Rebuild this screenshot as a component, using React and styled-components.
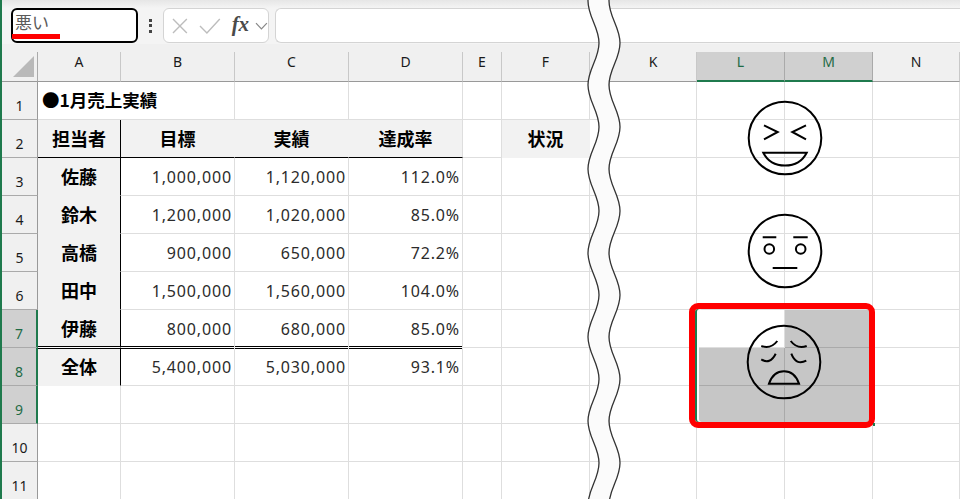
import React from "react";
import styled, { createGlobalStyle } from "styled-components";

const GREEN = "#1f7a4d";
const GRID = "#dedede";
const UI_FONT = `"Noto Sans", "Noto Sans CJK JP", sans-serif`;
const CJK_FONT = `"Noto Sans CJK JP", "Noto Sans", sans-serif`;

const Global = createGlobalStyle`
  html, body { margin: 0; padding: 0; background: #fff; overflow: hidden; }
  * { box-sizing: border-box; }
`;

const Page = styled.div`
  position: relative;
  width: 960px;
  height: 499px;
  overflow: hidden;
  border-left: 2px solid ${GREEN};
  font-family: ${UI_FONT};
  background: #fff;
`;

const FormulaBar = styled.div`
  display: flex;
  align-items: stretch;
  height: 44px;
  padding: 8px 0 1px 9px;
  background: linear-gradient(#e6e6e6 0, #f4f4f4 8px);
`;

const NameBox = styled.div`
  position: relative;
  width: 127px;
  border: 2px solid #000;
  border-radius: 6px;
  background: #fff;
  padding: 1px 0 0 2px;
  font-family: ${CJK_FONT};
  font-size: 17px;
  line-height: 22px;
  color: #5a5a5a;
`;

const RedUnderline = styled.span`
  position: absolute;
  left: -1px;
  top: 24px;
  width: 48px;
  height: 5px;
  background: #f00;
`;

const Dots = styled.div`
  width: 25px;
  display: flex;
  flex-direction: column;
  align-items: center;
  justify-content: center;
  gap: 2.5px;
  & > i { display: block; width: 3px; height: 3px; background: #444; }
`;

const ActionBox = styled.div`
  display: flex;
  align-items: center;
  width: 106px;
  border: 1px solid #d4d4d4;
  border-radius: 6px;
  background: #fff;
  padding-left: 8px;
`;

const CancelIcon = styled.svg`
  fill: none;
  stroke: #bdbdbd;
  stroke-width: 1.4;
`;

const EnterIcon = styled(CancelIcon)`
  margin-left: 11px;
`;

const ChevronIcon = styled.svg`
  fill: none;
  stroke: #888;
  stroke-width: 1.2;
  margin-left: 6px;
`;

const FxLabel = styled.span`
  font-family: "Liberation Serif", serif;
  font-style: italic;
  font-weight: 700;
  font-size: 21px;
  line-height: 1;
  color: #4a4a4a;
  margin: -2px 0 0 11px;
`;

const FormulaInput = styled.div`
  flex: 1;
  margin-left: 6px;
  border: 1px solid #d4d4d4;
  border-right: 0;
  border-radius: 6px 0 0 6px;
  background: #fff;
`;

const Sheet = styled.div`
  display: grid;
  grid-template-columns: 36px 83px 114px 114px 114px 39px 88px 20px 87px 88px 88px 87px;
  grid-template-rows: repeat(12, 38px);
`;

const HeaderSlot = styled.div`
  background: #f0f0f0;
  padding-top: 8px;
  display: flex;
`;

const CornerCell = styled(HeaderSlot)`
  & > div {
    flex: 1;
    border-right: 1px solid #aaa;
    border-bottom: 1px solid #999;
    position: relative;
  }
  & > div::after {
    content: "";
    position: absolute;
    left: 11px;
    top: 4px;
    width: 21px;
    height: 21px;
    background: #b9b9b9;
    clip-path: polygon(100% 0, 100% 100%, 0 100%);
  }
`;

const ColHead = styled.div`
  flex: 1;
  display: flex;
  justify-content: center;
  font-size: 14px;
  line-height: 20px;
  color: ${(p) => (p.$on ? "#1f6b45" : "#1a1a1a")};
  background: ${(p) => (p.$on ? "#d0d0d0" : "#f0f0f0")};
  border-right: 1px solid ${(p) => (p.$on ? "#aaa" : "#c8c8c8")};
  border-bottom: ${(p) => (p.$on ? `2px solid ${GREEN}` : "1px solid #999")};
`;

const RowHead = styled.div`
  display: flex;
  justify-content: center;
  align-items: flex-end;
  padding-bottom: 3px;
  font-size: 14px;
  line-height: 20px;
  color: ${(p) => (p.$on ? "#1f6b45" : "#1a1a1a")};
  background: ${(p) => (p.$on ? "#d0d0d0" : "#f0f0f0")};
  border-right: ${(p) => (p.$on ? `2px solid ${GREEN}` : "1px solid #999")};
  border-bottom: 1px solid #aaa;
`;

const Cell = styled.div`
  grid-column: span ${(p) => p.$span || 1};
  display: flex;
  align-items: center;
  justify-content: ${(p) =>
    p.$align === "center" ? "center" : p.$align === "right" ? "flex-end" : "flex-start"};
  padding: ${(p) => (p.$align === "center" ? "0" : "0 2px 0 4px")};
  white-space: nowrap;
  background: ${(p) => p.$fill || "#fff"};
  border-right: 1px solid ${(p) => p.$rightLine || GRID};
  border-bottom: 1px solid ${(p) => p.$bottomLine || GRID};
  box-shadow: ${(p) => p.$shadow || "none"};
  font-size: 16px;
  letter-spacing: 0.85px;
  color: #2b2b2b;
`;

const Strong = styled.span`
  font-family: ${CJK_FONT};
  font-weight: 700;
  font-size: 18px;
  letter-spacing: 0;
  color: #000;
  margin-top: -2px;
`;

const Title = styled(Strong)`
  font-size: 17.5px;
`;

const WaveArt = styled.svg`
  position: absolute;
  left: 578px;
  top: 0;
`;

const Face = styled.svg`
  position: absolute;
  left: ${(p) => p.$x}px;
  top: ${(p) => p.$y}px;
  fill: none;
  stroke: #000;
  stroke-width: 2;
`;

const SelectionFrame = styled.div`
  position: absolute;
  left: 687px;
  top: 303px;
  width: 186px;
  height: 125px;
  border: 6px solid #f00;
  border-radius: 9px;
  box-shadow: inset 2px 0 0 ${GREEN}, inset 4px 0 0 #fff;
  &::after {
    content: "";
    position: absolute;
    right: -6px;
    bottom: -4px;
    width: 2px;
    height: 3px;
    background: ${GREEN};
  }
`;

const COLS = ["A", "B", "C", "D", "E", "F", "", "K", "L", "M", "N"];

const DATA = {
  3: ["佐藤", "1,000,000", "1,120,000", "112.0%"],
  4: ["鈴木", "1,200,000", "1,020,000", "85.0%"],
  5: ["高橋", "900,000", "650,000", "72.2%"],
  6: ["田中", "1,500,000", "1,560,000", "104.0%"],
  7: ["伊藤", "800,000", "680,000", "85.0%"],
  8: ["全体", "5,400,000", "5,030,000", "93.1%"],
};
const HEAD2 = ["担当者", "目標", "実績", "達成率"];
const BAND = "#f2f2f2";
const SEL = "#c6c6c6";

function cellProps(r, c) {
  const p = {};
  const col = COLS[c];
  if (r === 1 && col === "A") p.$span = 2;
  if (r === 2 && c < 4) {
    p.$fill = BAND;
    p.$rightLine = c === 0 ? "#000" : BAND;
    p.$bottomLine = "#000";
    if (c === 3) p.$rightLine = GRID;
  }
  if (r === 2 && col === "F") {
    p.$fill = BAND;
    p.$rightLine = BAND;
    p.$bottomLine = BAND;
  }
  if (r >= 3 && r <= 8 && col === "A") {
    p.$fill = BAND;
    p.$rightLine = "#000";
    p.$bottomLine = BAND;
  }
  if (r === 7 && c < 4) {
    p.$bottomLine = "#fff";
    p.$shadow = "inset 0 -1px 0 #000";
  }
  if (r === 8 && c < 4) p.$shadow = "inset 0 1px 0 #000";
  const inSel = (col === "L" || col === "M") && r >= 7 && r <= 9;
  if (inSel && !(col === "L" && r === 7)) {
    p.$fill = SEL;
    p.$rightLine = "#aaa";
    p.$bottomLine = "#aaa";
  }
  return p;
}

function cellContent(r, c) {
  if (r === 1 && c === 0) return <Title>●1月売上実績</Title>;
  if (r === 2 && c < 4) return <Strong>{HEAD2[c]}</Strong>;
  if (r === 2 && COLS[c] === "F") return <Strong>状況</Strong>;
  if (DATA[r] && c === 0) return <Strong>{DATA[r][0]}</Strong>;
  if (DATA[r] && c < 4) return DATA[r][c];
  return null;
}

function cellAlign(r, c) {
  if (r === 1) return "left";
  if (r === 2 || c === 0) return "center";
  return "right";
}

// One edge of the torn-sheet wave; its bulges sit 84px apart, as in the picture.
function waveEdge(mid) {
  const amp = 5.5;
  const step = 42;
  const pts = [];
  let sign = -1;
  for (let y = -83; y <= 547; y += step) {
    pts.push([mid + sign * amp, y]);
    sign = -sign;
  }
  return pts;
}

function curve(pts) {
  return pts
    .slice(1)
    .map((pt, i) => {
      const prev = pts[i];
      const k = (pt[1] - prev[1]) * 0.38;
      return `C${prev[0]} ${prev[1] + k} ${pt[0]} ${pt[1] - k} ${pt[0]} ${pt[1]}`;
    })
    .join(" ");
}

function Wave() {
  const left = waveEdge(13.5);
  const right = waveEdge(34.5);
  const leftD = `M${left[0][0]} ${left[0][1]} ${curve(left)}`;
  const rightD = `M${right[0][0]} ${right[0][1]} ${curve(right)}`;
  const rightBack = [...right].reverse();
  const fillD = `${leftD} L${rightBack[0][0]} ${rightBack[0][1]} ${curve(rightBack)} Z`;
  return (
    <WaveArt width="60" height="499" viewBox="0 0 60 499">
      <path d={fillD} fill="#fbfbfb" />
      <path d={leftD} fill="none" stroke="#333" strokeWidth="1.3" />
      <path d={rightD} fill="none" stroke="#333" strokeWidth="1.3" />
    </WaveArt>
  );
}

const FaceArt = ({ x, y, children }) => (
  <Face $x={x} $y={y} width="76" height="76" viewBox="0 0 76 76">
    <circle cx="38" cy="38" r="36.3" />
    {children}
  </Face>
);

export default function App() {
  const rows = Array.from({ length: 11 }, (_, i) => i + 1);
  return (
    <Page>
      <Global />
      <FormulaBar>
        <NameBox>
          悪い
          <RedUnderline />
        </NameBox>
        <Dots>
          <i />
          <i />
          <i />
        </Dots>
        <ActionBox>
          <CancelIcon width="16" height="16" viewBox="0 0 16 16">
            <path d="M1 1 L15 15 M15 1 L1 15" />
          </CancelIcon>
          <EnterIcon width="22" height="16" viewBox="0 0 22 16">
            <path d="M1 8 L8 15 L21 1" />
          </EnterIcon>
          <FxLabel>fx</FxLabel>
          <ChevronIcon width="13" height="8" viewBox="0 0 13 8">
            <path d="M1 1 L6.5 7 L12 1" />
          </ChevronIcon>
        </ActionBox>
        <FormulaInput />
      </FormulaBar>
      <Sheet>
        <CornerCell>
          <div />
        </CornerCell>
        {COLS.map((col, i) => (
          <HeaderSlot key={i}>
            <ColHead $on={col === "L" || col === "M"}>{col}</ColHead>
          </HeaderSlot>
        ))}
        {rows.map((r) => (
          <React.Fragment key={r}>
            <RowHead $on={r >= 7 && r <= 9}>{r}</RowHead>
            {COLS.map((_, c) =>
              r === 1 && c === 1 ? null : (
                <Cell key={c} $align={cellAlign(r, c)} {...cellProps(r, c)}>
                  {cellContent(r, c)}
                </Cell>
              )
            )}
          </React.Fragment>
        ))}
      </Sheet>
      <Wave />
      <FaceArt x={745} y={100}>
        <path d="M17 25.3 L30.7 32 L17 39.3 M59 25.3 L45.3 32 L59 39.3" />
        <path d="M16.3 52.7 H59.7 C55 62 46 65.5 38 65.5 C30 65.5 21 62 16.3 52.7 Z" />
      </FaceArt>
      <FaceArt x={745} y={213}>
        <path d="M15.7 24.3 H29.3 M46.3 24.3 H60.7 M25.7 55 H50.3" />
        <circle cx="22.3" cy="36" r="4.8" />
        <circle cx="53.7" cy="36" r="4.8" />
      </FaceArt>
      <FaceArt x={743.5} y={324}>
        <path d="M15.3 22 Q24.7 25.5 31.3 17 M44.7 17 Q51.3 25.5 60.7 22" />
        <path d="M15.3 35.3 Q24 41 29.7 29.7 M45.3 29.7 Q50 42 60.3 36.7" />
        <path d="M23 59.7 H53 C50 51 44 47.3 38 47.3 C32 47.3 26 51 23 59.7 Z" />
      </FaceArt>
      <SelectionFrame />
    </Page>
  );
}
